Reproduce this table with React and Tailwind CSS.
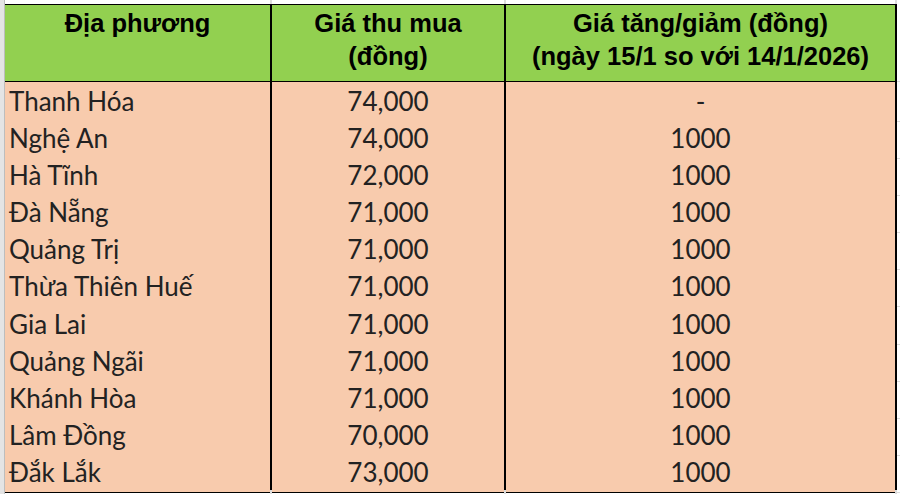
const rows = [
  ['Thanh Hóa', '74,000', '-'],
  ['Nghệ An', '74,000', '1000'],
  ['Hà Tĩnh', '72,000', '1000'],
  ['Đà Nẵng', '71,000', '1000'],
  ['Quảng Trị', '71,000', '1000'],
  ['Thừa Thiên Huế', '71,000', '1000'],
  ['Gia Lai', '71,000', '1000'],
  ['Quảng Ngãi', '71,000', '1000'],
  ['Khánh Hòa', '71,000', '1000'],
  ['Lâm Đồng', '70,000', '1000'],
  ['Đắk Lắk', '73,000', '1000'],
]

const cols = 'grid grid-cols-[267px_234px_391px_1fr]'

// empty sheet cells above/below the table, gridlines only
const Blank = ({ h }) => (
  <div className={`${cols} ${h}`}>
    <div className="border-r-2 border-[#dcdcdc]" />
    <div className="border-r-2 border-[#dcdcdc]" />
    <div className="border-r-2 border-[#dcdcdc]" />
    <div />
  </div>
)

export default function App() {
  return (
    <div className="flex h-[494px] w-[900px] overflow-hidden bg-white">
      {/* row header strip */}
      <div className="w-[5px] shrink-0 border-r border-[#bdbdbd] bg-[#e4e4e4]" />

      <div className="flex flex-1 flex-col">
        <Blank h="h-[4px]" />

        {/* Header */}
        <div className={`${cols} h-[78px] font-['Liberation_Sans',Arial,sans-serif] text-[25.5px] font-bold leading-[32.5px] text-black`}>
          <div className="border-y border-r-2 border-black bg-[#92d050] pt-[2px] text-center">Địa phương</div>
          <div className="border-y border-r-2 border-black bg-[#92d050] pt-[2px] text-center">
            Giá thu mua
            <br />
            (đồng)
          </div>
          <div className="border-y border-r-2 border-black bg-[#92d050] pt-[2px] text-center">
            Giá tăng/giảm (đồng)
            <br />
            (ngày 15/1 so với 14/1/2026)
          </div>
          <div className="border-b border-[#dcdcdc]" />
        </div>

        {/* Body */}
        {rows.map(([place, price, diff]) => (
          <div key={place} className={`${cols} h-[37.1px] font-['Lato','Liberation_Sans',sans-serif] text-[26px] text-[#222]`}>
            <div className="flex items-center border-b border-r-2 border-black bg-[#f8cbad] pl-[4px]">{place}</div>
            <div className="flex items-center justify-center border-b border-r-2 border-black bg-[#f8cbad]">{price}</div>
            <div className="flex items-center justify-center border-b border-r-2 border-black bg-[#f8cbad]">{diff}</div>
            <div className="border-b border-[#dcdcdc]" />
          </div>
        ))}

        <div className="flex-1">
          <Blank h="h-full" />
        </div>
      </div>
    </div>
  )
}
